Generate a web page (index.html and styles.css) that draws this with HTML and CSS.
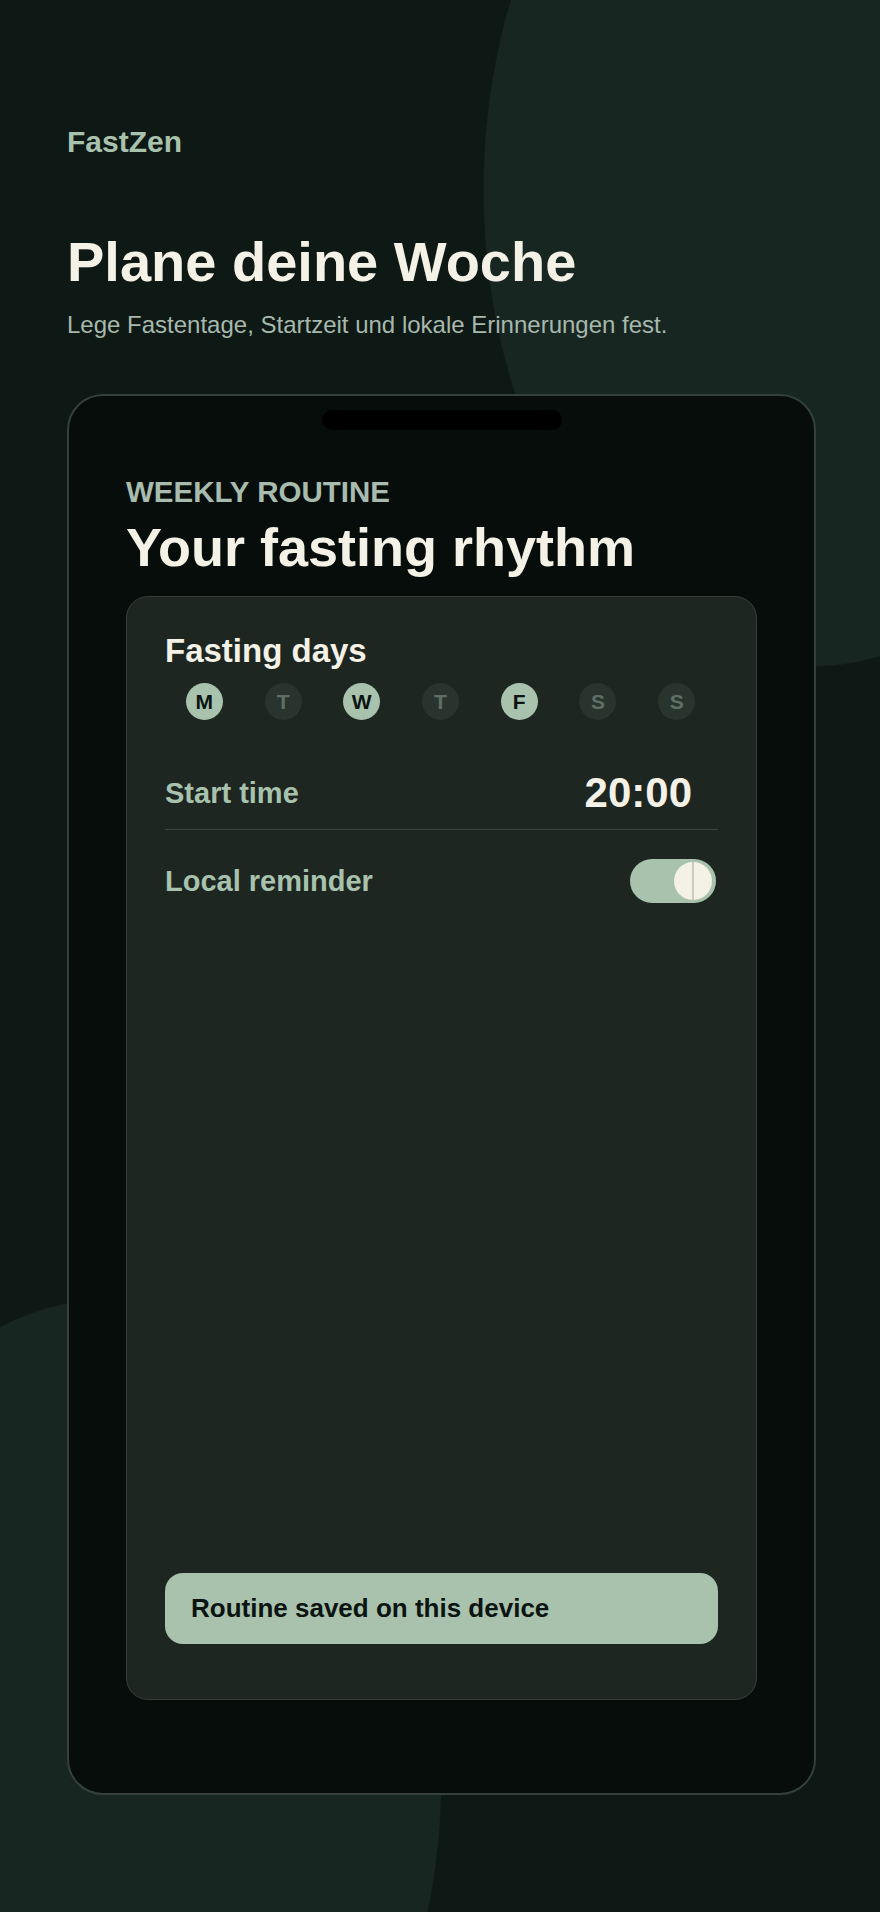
FILE: index.html
```html
<!DOCTYPE html>
<html lang="de">

<head>
    <meta charset="UTF-8">
    <meta name="viewport" content="width=device-width, initial-scale=1.0">
    <title>FastZen - Plane deine Woche</title>
    <link rel="stylesheet" href="styles.css">
</head>

<body>
    <div class="page">
        <header class="intro">
            <div class="brand">FastZen</div>
            <h1>Plane deine Woche</h1>
            <p class="lead">Lege Fastentage, Startzeit und lokale Erinnerungen fest.</p>
        </header>

        <div class="phone">
            <div class="notch"></div>
            <div class="eyebrow">WEEKLY ROUTINE</div>
            <h2>Your fasting rhythm</h2>

            <section class="card">
                <h3>Fasting days</h3>
                <div class="days">
                    <span class="day on">M</span>
                    <span class="day">T</span>
                    <span class="day on">W</span>
                    <span class="day">T</span>
                    <span class="day on">F</span>
                    <span class="day">S</span>
                    <span class="day">S</span>
                </div>

                <div class="row time-row">
                    <span class="row-label">Start time</span>
                    <span class="time">20:00</span>
                </div>

                <div class="row reminder-row">
                    <span class="row-label">Local reminder</span>
                    <span class="toggle on"><span class="knob"></span></span>
                </div>

                <div class="notice">Routine saved on this device</div>
            </section>
        </div>
    </div>
</body>

</html>
```

FILE: styles.css
```css
* {
    box-sizing: border-box;
}

html,
body {
    margin: 0;
    padding: 0;
}

body {
    font-family: "Liberation Sans", Arial, sans-serif;
    color: #f4f1e6;
    background-color: #0e1814;
    /* two soft blobs behind the content */
    background-image:
        radial-gradient(ellipse 330px 477px at 813px 190px, #182622 99.6%, rgba(24, 38, 34, 0) 100%),
        radial-gradient(ellipse 330px 477px at 112px 1775px, #182622 99.6%, rgba(24, 38, 34, 0) 100%);
    background-repeat: no-repeat;
    min-height: 1912px;
}

.page {
    padding: 124px 64px 117px 67px;
}

/* intro */

.brand {
    font-size: 30px;
    line-height: 36px;
    font-weight: 700;
    color: #a8c2ae;
}

.intro h1 {
    margin: 68px 0 0;
    font-size: 56px;
    line-height: 67px;
    font-weight: 700;
    color: #f4f1e6;
}

.lead {
    margin: 13px 0 0;
    font-size: 24px;
    line-height: 34px;
    color: #a7b8ad;
}

/* phone frame */

.phone {
    margin-top: 52px;
    height: 1401px;
    border: 2px solid #34403a;
    border-radius: 36px;
    background: #070d0a;
    padding: 14px 57px 93px;
    display: flex;
    flex-direction: column;
}

.notch {
    align-self: center;
    width: 240px;
    height: 20px;
    border-radius: 10px;
    background: #000;
}

.eyebrow {
    margin-top: 44px;
    font-size: 29.5px;
    line-height: 36px;
    font-weight: 700;
    color: #a7bcae;
}

.phone h2 {
    margin: 5px 0 0;
    font-size: 54px;
    line-height: 64px;
    font-weight: 700;
    color: #f4f1e6;
}

/* card */

.card {
    flex: 1;
    margin-top: 17px;
    background: #1e2622;
    border: 1px solid #343f39;
    border-radius: 22px;
    padding: 34px 38px 55px;
    display: flex;
    flex-direction: column;
}

.card h3 {
    margin: 0;
    font-size: 33px;
    line-height: 40px;
    font-weight: 700;
    color: #f4f1e6;
}

.days {
    margin: 12px 2px 36px 0;
    display: grid;
    grid-template-columns: repeat(7, 1fr);
    justify-items: center;
}

.day {
    width: 37px;
    height: 37px;
    border-radius: 50%;
    background: #29342f;
    color: #5f6f66;
    font-size: 21px;
    font-weight: 700;
    display: flex;
    align-items: center;
    justify-content: center;
}

.day.on {
    background: #a8c2ae;
    color: #0b1410;
}

.row {
    display: flex;
    justify-content: space-between;
    align-items: center;
}

.row-label {
    font-size: 29px;
    line-height: 35px;
    font-weight: 700;
    color: #a8c2ae;
}

.time-row {
    padding: 12px 0 11px;
    border-bottom: 1px solid #3a4640;
}

.time {
    font-size: 42px;
    line-height: 50px;
    font-weight: 700;
    color: #f4f1e6;
    padding-right: 26px;
}

.reminder-row {
    padding-top: 29px;
}

.toggle {
    position: relative;
    width: 86px;
    height: 44px;
    border-radius: 22px;
    background: #3a4640;
    margin-right: 2px;
}

.toggle.on {
    background: #a8c2ae;
}

.knob {
    position: absolute;
    top: 3px;
    right: 4px;
    width: 38px;
    height: 38px;
    border-radius: 50%;
    background: #f4f1e6;
}

.knob::after {
    content: "";
    position: absolute;
    left: 18px;
    top: 0;
    width: 2px;
    height: 100%;
    background: #c9cbc0;
}

.notice {
    margin-top: auto;
    background: #a8c2ae;
    color: #0b1410;
    border-radius: 18px;
    padding: 20px 26px 21px;
    font-size: 26px;
    line-height: 30px;
    font-weight: 700;
}
```
